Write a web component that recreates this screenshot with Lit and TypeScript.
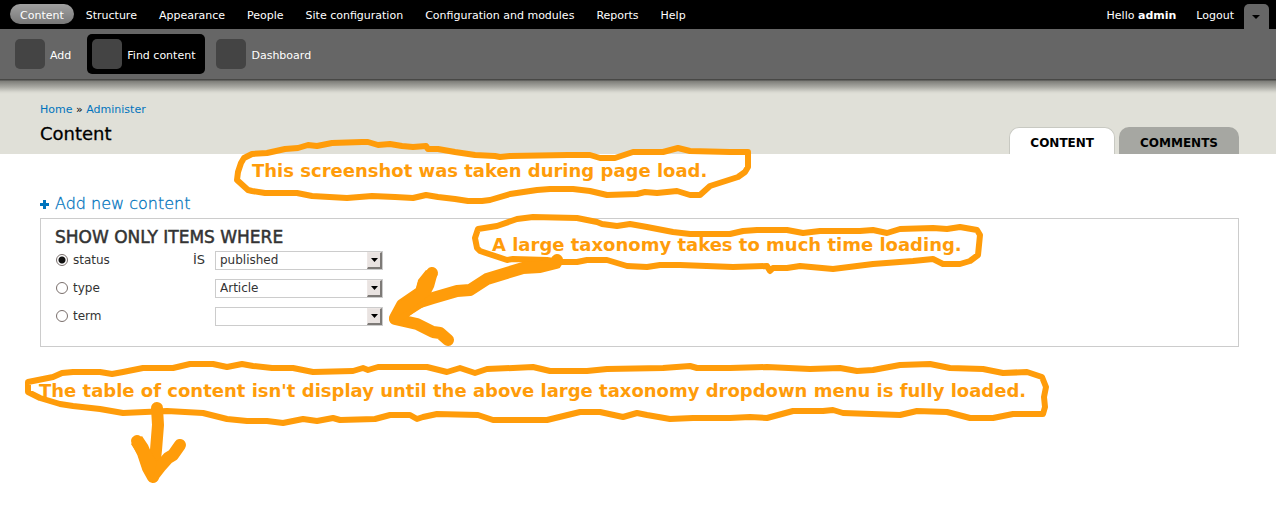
import { LitElement, html, svg, css } from "lit";
import { customElement, state } from "lit/decorators.js";

const MENU = ["Content", "Structure", "Appearance", "People", "Site configuration", "Configuration and modules", "Reports", "Help"];
const SHORTCUTS = ["Add", "Find content", "Dashboard"];
const TABS = ["Content", "Comments"];
const FILTERS = [
  { id: "status", operator: "İS", value: "published" },
  { id: "type", operator: "", value: "Article" },
  { id: "term", operator: "", value: "" },
];

const NOTES = [
  { x: 252, y: 177, text: "This screenshot was taken during page load." },
  { x: 492, y: 251, text: "A large taxonomy takes to much time loading." },
  { x: 39, y: 397, text: "The table of content isn't display until the above large taxonomy dropdown menu is fully loaded." },
];

const LOOPS = [
  "M237 180 238 172 241 163 244 158 252 154 267 153 285 149 298 148 308 145 317 146 332 143 362 142 368 142 378 145 390 144 402 146 413 147 426 146 428 149 438 149 455 152 475 155 495 156 500 157 510 156 568 155 590 155 600 158 615 158 633 152 663 152 678 148 690 151 730 152 748 152 748 167 745 172 738 177 710 186 700 195 690 195 677 191 657 193 645 192 637 194 607 195 590 191 573 189 550 189 537 190 510 194 490 200 482 201 468 201 455 199 438 197 426 195 413 198 395 197 372 196 347 198 312 196 297 193 265 193 252 191 248 190Z",
  "M477 248 475 238 478 229 497 226 517 219 533 217 577 218 597 222 602 224 617 226 630 224 647 227 673 232 690 234 700 234 730 234 743 231 757 230 787 230 803 233 820 231 860 231 873 230 887 233 900 229 933 228 947 229 960 227 977 230 980 235 978 255 970 261 960 264 943 264 933 259 913 261 873 264 833 269 800 266 787 268 773 268 770 271 767 266 733 267 680 265 660 265 647 267 627 266 607 260 587 260 577 262 560 262 547 260 513 259 507 260 480 251Z",
  "M28 392 28 382 53 377 62 373 73 372 100 372 112 374 123 372 143 368 173 368 190 364 213 364 227 367 242 364 253 366 272 368 293 368 313 372 353 371 363 368 368 370 378 367 427 367 447 372 460 368 475 373 487 369 513 368 533 367 550 371 587 371 607 369 663 368 690 366 697 368 730 368 767 367 810 369 840 368 857 371 873 370 900 365 930 364 950 368 983 369 1003 373 1027 372 1042 377 1046 387 1044 397 1045 407 1043 414 1013 414 993 418 970 418 947 412 917 411 900 415 843 413 833 410 823 411 793 411 767 418 750 417 730 418 693 418 670 419 647 415 637 413 623 417 600 412 580 412 547 420 493 420 478 415 437 414 423 417 417 419 410 415 390 415 375 419 340 420 333 418 317 421 303 419 283 423 267 421 247 421 227 419 203 413 167 411 123 413 100 409 73 406 60 404 40 398Z",
];

const ARROWS = [
  "M557 260 556 263 540 267 523 268 487 279 470 290 457 291 433 298 417 303 395 319 417 324 433 332 440 333 448 340",
  "M432 273 423 285 421 292 402 305 395 318 420 302",
  "M157 408 158 425 156 450 153 477 148 468 143 453 137 441",
  "M180 445 173 455 168 458 160 467 153 476",
];

@customElement("page-notes")
class PageNotes extends LitElement {
  static styles = css`
    :host { position: absolute; inset: 0; overflow: hidden; pointer-events: none; }
    .canvas { display: block; width: 1276px; height: 523px; }
    .loop, .arrow { fill: none; stroke: #ff9c0a; stroke-linejoin: round; stroke-linecap: round; }
    .loop { stroke-width: 6px; }
    .arrow { stroke-width: 12px; }
    .solid { fill: #ff9c0a; }
    .note { fill: #ff9c0a; font: bold 18px Verdana, "DejaVu Sans", sans-serif; }
  `;
  render() {
    return html`<svg class="canvas" viewBox="0 0 1276 523">
      ${LOOPS.map((d) => svg`<path class="loop" d=${d}></path>`)}
      ${ARROWS.map((d) => svg`<path class="arrow" d=${d}></path>`)}
      <path class="solid" d="M426 270 437 276 434 287 430 295 412 308 398 316 398 302 416 291 418 280ZM131 444 142 436 148 445 151 452 157 462 153 478 144 470 138 455Z"></path>
      ${NOTES.map((n) => svg`<text class="note" x=${n.x} y=${n.y}>${n.text}</text>`)}
    </svg>`;
  }
}

@customElement("app-root")
class AppRoot extends LitElement {
  static styles = css`
    :host { display: block; position: relative; min-height: 100vh; background: #fff; color: #333; font: 11px/20px "DejaVu Sans", Verdana, sans-serif; }
    * { box-sizing: border-box; }
    a { color: #0074bd; text-decoration: none; }
    .toolbar { display: flex; justify-content: space-between; height: 29px; padding: 4px 7px 0 10px; background: #000; color: #fff; white-space: nowrap; }
    .menu, .user { display: flex; }
    .menu { gap: 2px; }
    .menu a, .user a { height: 20px; padding: 2px 10px 0; line-height: 20px; color: #fff; }
    .menu a.active { border-radius: 10px; background: linear-gradient(#a0a0a0, #787878); }
    .toggle { width: 25px; height: 25px; padding: 2px 0 0; border: 0; border-radius: 5px 5px 0 0; background: #666; display: grid; place-items: center; }
    .drawer { display: flex; gap: 6px; padding: 5px 10px; background: #666; }
    .drawer a { display: flex; align-items: center; gap: 5px; padding: 5px 10px 5px 5px; border-radius: 5px; color: #fff; line-height: 20px; }
    .drawer a.active { background: #000; }
    .icon { width: 30px; height: 30px; border-radius: 5px; background: #444; }
    .label { padding-top: 3px; }
    .branding { display: flex; justify-content: space-between; align-items: flex-end; height: 75px; padding: 0 37px 0 40px; background: linear-gradient(#484846 0, #484846 1px, #7d7d78 2px, #a9a9a3 8px, #d8d8d0 13px, #e0e0d8 15px); }
    .crumbs { color: #000; line-height: 16px; }
    h1 { margin: 4px 0 8px; font-size: 18px; line-height: 24px; font-weight: 400; color: #000; -webkit-text-stroke: 0.3px #000; }
    .tabs { display: flex; gap: 4px; }
    .tabs a { height: 27px; padding: 3px 21px 0; border-radius: 10px 10px 0 0; background: #a6a7a2; color: #000; font-size: 12px; line-height: 26px; font-weight: 700; text-transform: uppercase; }
    .tabs a.active { padding: 2px 20px 0; border: 1px solid #c8c9c2; border-bottom: 0; background: #fff; }
    .content { padding: 38px 37px 0 40px; }
    .add { display: inline-flex; align-items: center; gap: 6px; font-size: 16px; line-height: 24px; font-weight: 200; -webkit-text-stroke: 0.3px #0074bd; }
    .filters { height: 129px; margin-top: 2px; padding: 8px 14px; border: 1px solid #ccc; font-size: 12px; }
    h2 { margin: 0; font-size: 17px; line-height: 20px; font-weight: 400; text-transform: uppercase; -webkit-text-stroke: 0.5px #333; }
    .row { display: grid; grid-template-columns: 133px 17px 168px; column-gap: 5px; align-items: center; height: 19px; margin: 3px 0 9px; }
    .pick { display: flex; align-items: center; gap: 5px; }
    .pick input { appearance: none; width: 12px; height: 12px; margin: 0 0 0 1px; border: 1px solid #7a6f6c; border-radius: 50%; background: #fff; }
    .pick input:checked { background: radial-gradient(circle, #111 0 3px, #fff 4px); }
    .operator { font-size: 13px; }
    .choice { display: grid; }
    .choice > * { grid-area: 1 / 1; }
    select { appearance: none; width: 100%; height: 19px; margin: 0; padding: 0 20px 0 4px; border: 1px solid #ccc; border-radius: 0; background: #fff; color: #333; font: 12px/17px "DejaVu Sans", sans-serif; }
    .arrow { justify-self: end; width: 15px; height: 17px; margin: 1px; border: 1px solid #ede7e5; border-right: 2px solid #7d7a77; border-bottom: 2px solid #7d7a77; background: #e9e3e1; display: grid; place-items: center; pointer-events: none; }
  `;
  @state() private selected = "status";

  render() {
    return html`
      <header>
        <div class="toolbar">
          <nav class="menu">${MENU.map((m, i) => html`<a href="#" class=${i === 0 ? "active" : ""}>${m}</a>`)}</nav>
          <div class="user">
            <a href="#">Hello <b>admin</b></a><a href="#">Logout</a>
            <button class="toggle" aria-label="Toggle shortcuts"><svg width="9" height="5"><path d="M0 0H8L4 4Z"/></svg></button>
          </div>
        </div>
        <nav class="drawer">${SHORTCUTS.map((s, i) => html`<a href="#" class=${i === 1 ? "active" : ""}><span class="icon"></span><span class="label">${s}</span></a>`)}</nav>
        <div class="branding">
          <div>
            <div class="crumbs"><a href="#">Home</a> » <a href="#">Administer</a></div>
            <h1>Content</h1>
          </div>
          <nav class="tabs">${TABS.map((t, i) => html`<a href="#" class=${i === 0 ? "active" : ""}>${t}</a>`)}</nav>
        </div>
      </header>
      <main class="content">
        <a class="add" href="#"><svg width="9" height="9"><path fill="#0074bd" d="M3 0H6V3H9V6H6V9H3V6H0V3H3Z"/></svg>Add new content</a>
        <form class="filters">
          <h2>Show only items where</h2>
          ${FILTERS.map((f) => html`<div class="row">
            <label class="pick"><input type="radio" name="filter" .checked=${this.selected === f.id} @change=${() => (this.selected = f.id)} />${f.id}</label>
            <span class="operator">${f.operator}</span>
            <div class="choice">
              <select aria-label=${f.id}><option>${f.value}</option></select>
              <span class="arrow"><svg width="7" height="4"><path d="M0 0H7L3.5 4Z"/></svg></span>
            </div>
          </div>`)}
        </form>
      </main>
      <page-notes></page-notes>
    `;
  }
}
